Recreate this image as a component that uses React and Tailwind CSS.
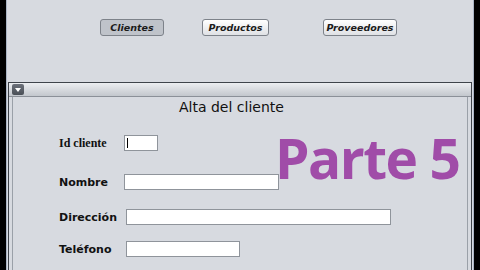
export default function App() {
  const btn = "h-[17px] rounded-[3px] border border-[#7d828a] text-[9.5px] italic font-bold text-[#1b1b1b] flex items-center justify-center leading-none"
  const label = "text-[11px] font-bold text-[#111] leading-none"
  const input = "h-[16px] bg-white border border-[#8f949b]"

  return (
    <div className="w-[480px] h-[270px] bg-black flex overflow-hidden" style={{ fontFamily: '"DejaVu Sans", sans-serif' }}>
      <div className="ml-[6px] w-[468px] h-[300px] bg-[#d7dae0] border-x border-[#aab4c4] flex flex-col">
        {/* tab buttons */}
        <div className="h-[82px] flex items-start pt-[19px]">
          <div className={`${btn} ml-[93px] w-[64px] bg-[#bfc3ca]`}>Clientes</div>
          <div className={`${btn} ml-[38px] w-[67px] bg-gradient-to-b from-white to-[#dfe1e5]`}>Productos</div>
          <div className={`${btn} ml-[54px] w-[74px] bg-gradient-to-b from-white to-[#dfe1e5]`}>Proveedores</div>
        </div>

        {/* internal frame */}
        <div className="relative mx-[1px] flex-1 border border-[#3f444b] flex flex-col">
          <div className="h-[14px] bg-gradient-to-b from-[#eceef1] to-[#c3c7cd] border-b border-[#8b9098] flex items-center pl-[3px]">
            <div className="w-[12px] h-[11px] rounded-[2px] bg-gradient-to-b from-[#6c717a] to-[#4a4f57] flex items-center justify-center">
              <svg width="6" height="4" viewBox="0 0 6 4"><path d="M0 0h6L3 4z" fill="#fff" /></svg>
            </div>
          </div>
          <div className="flex-1 mx-[3px] border-x border-[#9aa0a8] flex flex-col">
            <div className="ml-[166px] mt-[1px] text-[14px] text-[#111] leading-[18px]">Alta del cliente</div>

            <div className="flex items-center mt-[19px] h-[16px]">
              <div className={`${label} ml-[46px] w-[65px]`} style={{ fontFamily: '"Liberation Serif", serif', fontSize: '12px' }}>Id cliente</div>
              <div className={`${input} w-[34px] border-[#7d8aa0] flex items-center pl-[2px]`}>
                <div className="w-[1px] h-[10px] bg-black" />
              </div>
            </div>

            <div className="flex items-center mt-[23px] h-[16px]">
              <div className={`${label} ml-[46px] w-[65px]`}>Nombre</div>
              <div className={`${input} w-[155px]`} />
            </div>

            <div className="flex items-center mt-[19px] h-[16px]">
              <div className={`${label} ml-[46px] w-[67px]`}>Dirección</div>
              <div className={`${input} w-[265px]`} />
            </div>

            <div className="flex items-center mt-[16px] h-[16px]">
              <div className={`${label} ml-[46px] w-[67px]`}>Teléfono</div>
              <div className={`${input} w-[114px]`} />
            </div>
          </div>

          <div className="absolute left-[266px] top-[47px] text-[55px] font-bold text-[#a04ca8] tracking-[-1.5px] leading-none" style={{ fontFamily: '"Open Sans", sans-serif' }}>
            Parte 5
          </div>
        </div>
      </div>
    </div>
  )
}
